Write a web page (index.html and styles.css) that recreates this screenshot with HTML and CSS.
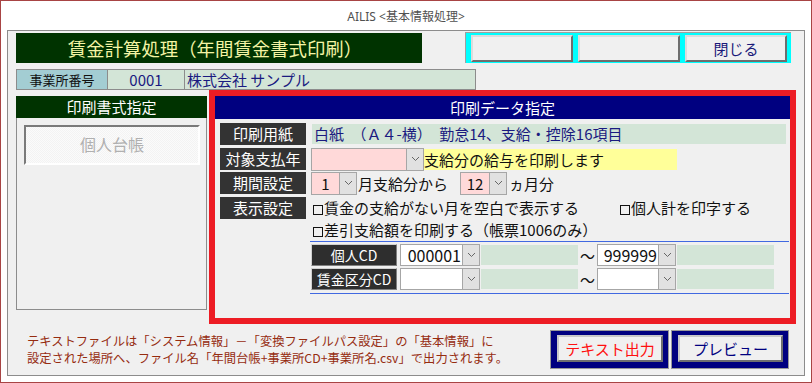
FILE: index.html
```html
<!DOCTYPE html>
<html lang="ja">
<head>
    <meta charset="UTF-8">
    <title>AILIS &lt;基本情報処理&gt;</title>
    <link rel="stylesheet" href="styles.css">
</head>
<body>
<div class="window">
    <div class="caption">AILIS &lt;基本情報処理&gt;</div>
    <div class="panel">
        <div class="top-row">
            <div class="title">賃金計算処理（年間賃金書式印刷）</div>
            <div class="func-keys">
                <button class="key"></button>
                <button class="key"></button>
                <button class="key">閉じる</button>
            </div>
        </div>

        <div class="office">
            <div class="office-label">事業所番号</div>
            <div class="office-code">0001</div>
            <div class="office-name">株式会社 サンプル</div>
        </div>

        <div class="main">
            <div class="format">
                <div class="format-head">印刷書式指定</div>
                <div class="format-body">
                    <div class="format-item">個人台帳</div>
                </div>
            </div>

            <div class="data">
                <div class="data-head">印刷データ指定</div>

                <div class="row r1">
                    <div class="lbl">印刷用紙</div>
                    <div class="paper">白紙　（Ａ４-横）　勤怠14、支給・控除16項目</div>
                </div>
                <div class="row r2">
                    <div class="lbl">対象支払年</div>
                    <div class="combo pink year">
                        <span class="val"></span>
                        <span class="arrow"><svg width="9" height="6" viewBox="0 0 9 6"><polyline points="1,1 4.5,4.5 8,1" fill="none" stroke="#666" stroke-width="1"/></svg></span>
                    </div>
                    <div class="note">支給分の給与を印刷します</div>
                </div>
                <div class="row r3">
                    <div class="lbl">期間設定</div>
                    <div class="combo pink month">
                        <span class="val">1</span>
                        <span class="arrow"><svg width="9" height="6" viewBox="0 0 9 6"><polyline points="1,1 4.5,4.5 8,1" fill="none" stroke="#666" stroke-width="1"/></svg></span>
                    </div>
                    <span class="txt">月支給分から</span>
                    <div class="combo pink month2">
                        <span class="val">12</span>
                        <span class="arrow"><svg width="9" height="6" viewBox="0 0 9 6"><polyline points="1,1 4.5,4.5 8,1" fill="none" stroke="#666" stroke-width="1"/></svg></span>
                    </div>
                    <span class="txt txt2">ヵ月分</span>
                </div>
                <div class="row r4">
                    <div class="lbl">表示設定</div>
                    <div class="opts">
                        <div class="opt-line">
                            <span class="opt opt-wide"><i class="box"></i>賃金の支給がない月を空白で表示する</span>
                            <span class="opt"><i class="box"></i>個人計を印字する</span>
                        </div>
                        <div class="opt-line">
                            <span class="opt"><i class="box"></i>差引支給額を印刷する（帳票1006のみ）</span>
                        </div>
                    </div>
                </div>

                <div class="cd-block">
                    <div class="cd-row">
                        <div class="cd-lbl">個人CD</div>
                        <div class="combo cd">
                            <span class="val">000001</span>
                            <span class="arrow"><svg width="9" height="6" viewBox="0 0 9 6"><polyline points="1,1 4.5,4.5 8,1" fill="none" stroke="#666" stroke-width="1"/></svg></span>
                        </div>
                        <div class="cd-fill"></div>
                        <span class="tilde">～</span>
                        <div class="combo cd cd2">
                            <span class="val">999999</span>
                            <span class="arrow"><svg width="9" height="6" viewBox="0 0 9 6"><polyline points="1,1 4.5,4.5 8,1" fill="none" stroke="#666" stroke-width="1"/></svg></span>
                        </div>
                        <div class="cd-fill"></div>
                    </div>
                    <div class="cd-row">
                        <div class="cd-lbl">賃金区分CD</div>
                        <div class="combo cd">
                            <span class="val"></span>
                            <span class="arrow"><svg width="9" height="6" viewBox="0 0 9 6"><polyline points="1,1 4.5,4.5 8,1" fill="none" stroke="#666" stroke-width="1"/></svg></span>
                        </div>
                        <div class="cd-fill"></div>
                        <span class="tilde">～</span>
                        <div class="combo cd cd2">
                            <span class="val"></span>
                            <span class="arrow"><svg width="9" height="6" viewBox="0 0 9 6"><polyline points="1,1 4.5,4.5 8,1" fill="none" stroke="#666" stroke-width="1"/></svg></span>
                        </div>
                        <div class="cd-fill"></div>
                    </div>
                </div>
            </div>
        </div>

        <div class="bottom">
            <p class="hint">テキストファイルは「システム情報」－「変換ファイルパス設定」の「基本情報」に<br>設定された場所へ、ファイル名「年間台帳+事業所CD+事業所名.csv」で出力されます。</p>
            <div class="actions">
                <div class="frame"><button class="act act-red">テキスト出力</button></div>
                <div class="frame frame2"><button class="act">プレビュー</button></div>
            </div>
        </div>
    </div>
</div>
</body>
</html>
```

FILE: styles.css
```css
* {
    box-sizing: border-box;
}

body {
    margin: 0;
    font-family: "Noto Sans CJK JP", sans-serif;
}

.window {
    width: 812px;
    height: 383px;
    border: 1px solid #a84444;
    background: #fff;
}

.caption {
    height: 29px;
    line-height: 31px;
    text-align: center;
    font-family: "Noto Sans", "Noto Sans CJK JP", sans-serif;
    font-size: 12px;
    color: #505050;
}

.panel {
    margin: 0 6px;
    height: 346px;
    border: 1px solid #8c8c8c;
    background: #f0f0f0;
    padding: 2px 0 0 8px;
}

/* タイトル行 */
.top-row {
    display: flex;
    height: 30px;
}
.title {
    width: 406px;
    height: 30px;
    background: #003300;
    color: #f4f4a4;
    font-size: 18.4px;
    line-height: 30px;
    text-align: center;
    padding-right: 8px;
}
.func-keys {
    display: flex;
    gap: 5px;
    margin-left: 43px;
    margin-top: -1px;
    width: 326px;
    height: 31px;
    padding: 2px 4px 1px 5px;
    background: #00ffff;
    border-top: 1px solid #a0a0a0;
    border-left: 1px solid #a0a0a0;
}
.key {
    width: 102px;
    height: 27px;
    padding: 0;
    background: #f0f0f0;
    border: 2px solid;
    border-color: #dcdcdc #6e6e6e #6e6e6e #dcdcdc;
    font-family: "Noto Sans CJK JP", sans-serif;
    font-size: 15px;
    color: #1a1a7a;
}

/* 事業所 */
.office {
    display: flex;
    margin-top: 6px;
    width: 460px;
    height: 21px;
    border: 1px solid #8c8c8c;
}
.office-label {
    width: 91px;
    background: #a3cdd3;
    border-right: 1px solid #8c8c8c;
    font-size: 13px;
    line-height: 19px;
    text-align: center;
    color: #111;
}
.office-code {
    width: 77px;
    background: #d3e5d7;
    border-right: 1px solid #8c8c8c;
    font-size: 15px;
    line-height: 19px;
    text-align: center;
    color: #1a1a80;
}
.office-name {
    flex: 1;
    background: #d3e5d7;
    font-size: 15px;
    line-height: 19px;
    padding-left: 2px;
    color: #1a1a80;
}

.main {
    display: flex;
}

/* 印刷書式指定 */
.format {
    margin-top: 6px;
    width: 191px;
    height: 214px;
}
.format-head {
    height: 22px;
    background: #003300;
    color: #fff;
    font-size: 15px;
    line-height: 22px;
    text-align: center;
}
.format-body {
    height: 192px;
    border: 1px solid #8c8c8c;
    border-top: none;
    padding: 7px 6px 0 7px;
}
.format-item {
    height: 40px;
    border: 2px solid;
    border-color: #7a7a7a #fff #fff #7a7a7a;
    background: repeating-conic-gradient(#f3f3f3 0 25%, #fbfbfb 0 50%) 0 0 / 2px 2px;
    color: #b0b0b0;
    font-size: 16px;
    line-height: 34px;
    text-align: center;
}

/* 印刷データ指定 */
.data {
    margin-left: 2px;
    width: 587px;
    height: 234px;
    border: 6px solid #ed1c24;
}
.data-head {
    height: 23px;
    background: #000080;
    color: #fff;
    font-size: 15px;
    line-height: 23px;
    text-align: center;
}

.row {
    display: flex;
    align-items: center;
    height: 22px;
    padding-left: 5px;
    font-size: 15px;
}
.r1 { margin-top: 4px; }
.r2 { margin-top: 3px; }
.r3 { margin-top: 2px; }
.r4 {
    margin-top: 3px;
    height: 44px;
    align-items: flex-start;
}

.lbl {
    width: 86px;
    height: 22px;
    background: #333;
    color: #fff;
    font-size: 15px;
    line-height: 22px;
    text-align: center;
}

.paper {
    margin-left: 6px;
    width: 474px;
    height: 20px;
    background: #d3e5d7;
    color: #1a1a80;
    line-height: 20px;
    padding-left: 2px;
    white-space: nowrap;
}

.combo {
    display: flex;
    height: 23px;
    border: 1px solid #a6a6a6;
    margin-left: 5px;
}
.combo .val {
    flex: 1;
    background: #ffd9d9;
    text-align: center;
    line-height: 21px;
    color: #111;
}
.combo .arrow {
    display: flex;
    align-items: center;
    justify-content: center;
    width: 17px;
    background: #e1e1e1;
    border-left: 1px solid #a6a6a6;
}
.year { width: 113px; }
.month { width: 46px; }
.month2 {
    width: 47px;
    margin-left: 12px;
}

.note {
    width: 253px;
    height: 21px;
    background: #ffff99;
    line-height: 21px;
    color: #111;
}

.txt {
    margin-left: 1px;
    color: #111;
}
.txt2 { margin-left: 2px; }

.opts {
    margin-left: 7px;
}
.opt-line {
    display: flex;
    height: 22px;
    line-height: 22px;
    color: #111;
}
.opt-wide {
    width: 307px;
}
.box {
    display: inline-block;
    width: 10px;
    height: 10px;
    border: 1px solid #111;
    margin-right: 1px;
    vertical-align: -1px;
}

/* コード範囲 */
.cd-block {
    margin-left: 95px;
    width: 479px;
    border-top: 1px solid #4169e1;
    border-bottom: 1px solid #4169e1;
    padding: 2px 0 3px;
    display: flex;
    flex-direction: column;
    gap: 2px;
}
.cd-row {
    display: flex;
    align-items: center;
    height: 22px;
}
.cd-lbl {
    margin-left: 1px;
    width: 86px;
    height: 22px;
    background: #2e2e2e;
    border: 1px solid;
    border-color: #d0d0d0 #808080 #808080 #d0d0d0;
    color: #fff;
    font-size: 14px;
    line-height: 20px;
    text-align: center;
}
.combo.cd {
    margin-left: 3px;
    width: 80px;
    height: 22px;
}
.combo.cd .val {
    background: #fff;
    text-align: right;
    padding-right: 1px;
    font-size: 16px;
    line-height: 20px;
}
.combo.cd2 {
    margin-left: 0;
    width: 79px;
}
.cd-fill {
    margin-left: 1px;
    width: 97px;
    height: 20px;
    background: #d3e5d7;
}
.tilde {
    width: 19px;
    text-align: center;
    font-size: 15px;
    color: #111;
}

/* 下部 */
.bottom {
    display: flex;
    align-items: center;
    height: 51px;
    padding-left: 11px;
}
.hint {
    margin: 0;
    width: 523px;
    font-size: 12.3px;
    line-height: 17px;
    color: #962c10;
    white-space: nowrap;
}
.actions {
    display: flex;
    gap: 2px;
}
.frame {
    width: 119px;
    height: 39px;
    border: 1px solid #9a9a9a;
    background: #000080;
    padding: 4px 5px 6px 6px;
}
.frame2 {
    width: 118px;
}
.act {
    width: 100%;
    height: 100%;
    padding: 0;
    background: #f0f0f0;
    border: 2px solid;
    border-color: #c8c8c8 #707070 #707070 #c8c8c8;
    font-family: "Noto Sans CJK JP", sans-serif;
    font-size: 15px;
    color: #000080;
}
.act-red {
    color: #ff1010;
}
```
